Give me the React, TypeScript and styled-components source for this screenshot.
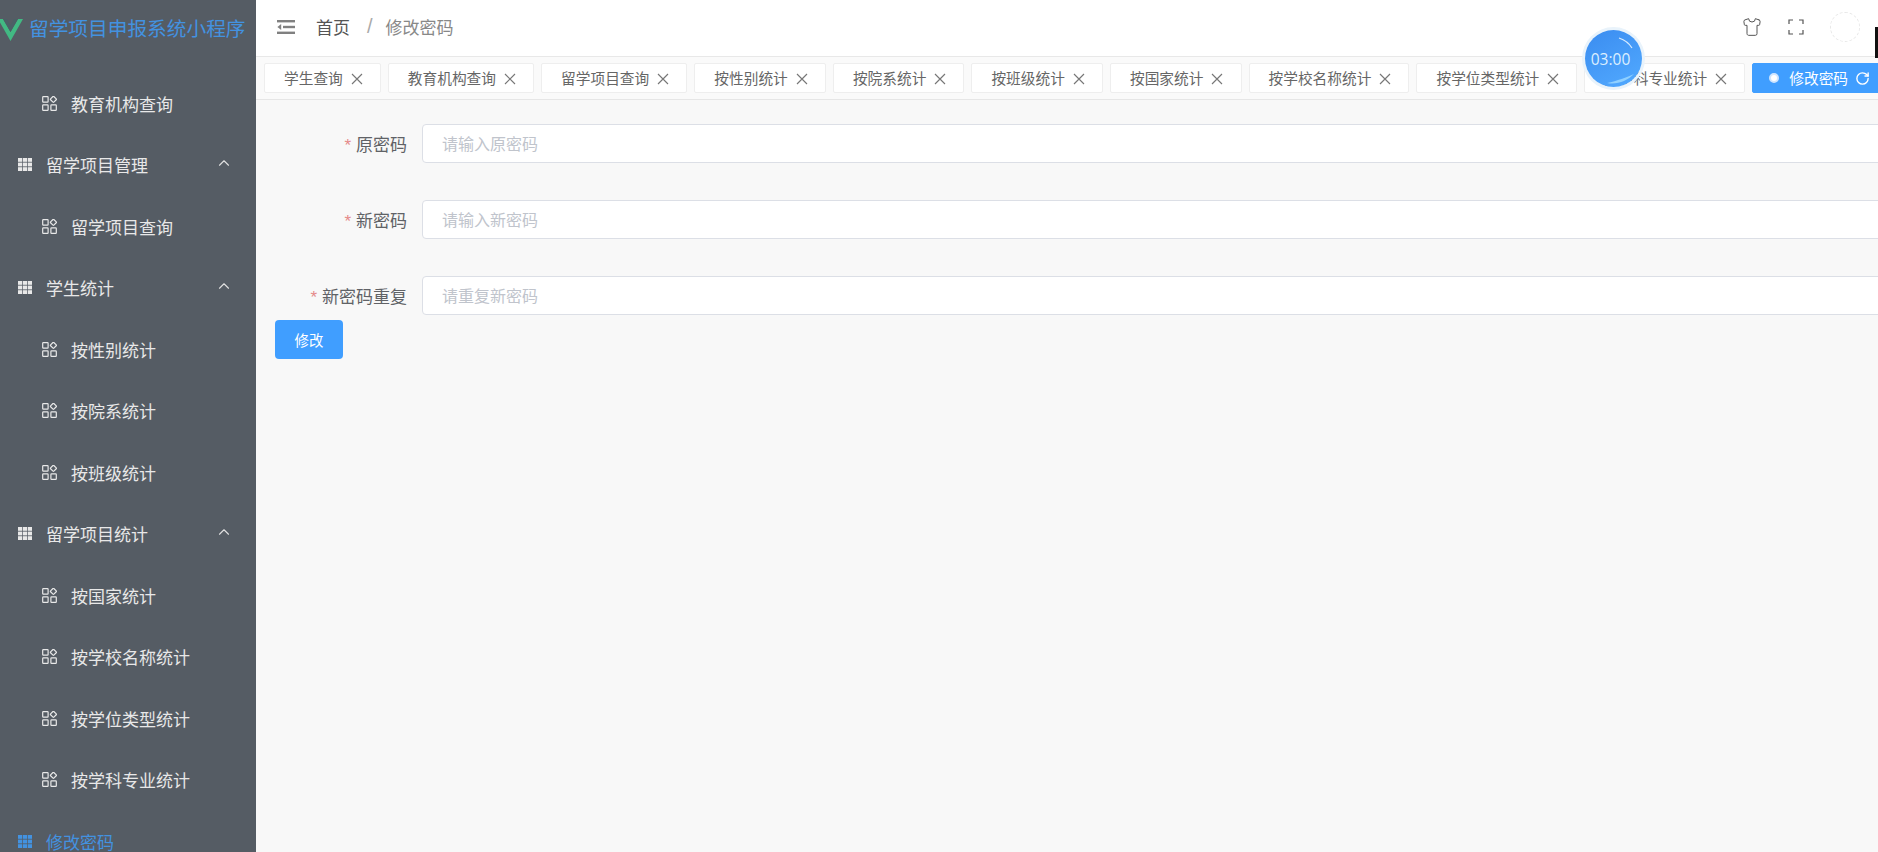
import React from "react"
import styled, { createGlobalStyle } from "styled-components"
import { ChevronUp, RotateCw, Shirt } from "lucide-react"

const GlobalStyle = createGlobalStyle`
  html, body {
    margin: 0;
    height: 100%;
    overflow: hidden;
    background: #f8f8f8;
    font-family: "Liberation Sans", "Noto Sans CJK SC", sans-serif;
  }
  * {
    box-sizing: border-box;
  }
`

const SubIcon = () => (
  <svg width="15" height="15" viewBox="0 0 15 15" fill="none" stroke="currentColor" strokeWidth="1.2">
    <rect x="0.7" y="0.7" width="5.4" height="5.4" rx="0.6" />
    <rect x="9.1" y="1" width="4.6" height="4.6" rx="0.6" transform="rotate(45 11.4 3.3)" />
    <rect x="0.7" y="8.9" width="5.4" height="5.4" rx="0.6" />
    <rect x="8.9" y="8.9" width="5.4" height="5.4" rx="0.6" />
  </svg>
)

const GridIcon = () => (
  <svg width="14" height="13" viewBox="0 0 14 13" fill="currentColor">
    {[0, 4.6, 9.2].flatMap(y =>
      [0, 4.9, 9.8].map(x => <rect key={`${x}-${y}`} x={x} y={y} width="4.2" height="3.8" />)
    )}
  </svg>
)

const VueLogo = () => (
  <svg width="25" height="22" viewBox="0 0 25 22">
    <polygon points="0,0 5,0 12.5,13 20,0 25,0 12.5,22" fill="#42b983" />
    <polygon points="5,0 9,0 12.5,6 16,0 20,0 12.5,13" fill="#4c5f66" />
  </svg>
)

const FoldIcon = () => (
  <svg width="18" height="14" viewBox="0 0 18 14" fill="#808080">
    <rect x="0" y="0" width="18" height="2.4" />
    <rect x="6" y="5.8" width="12" height="2.4" />
    <rect x="0" y="11.6" width="18" height="2.4" />
    <polygon points="4.2,4 4.2,10 0.4,7" />
  </svg>
)

const FullIcon = () => (
  <svg width="16" height="16" viewBox="0 0 16 16" fill="none" stroke="#555" strokeWidth="1.2">
    <path d="M1 5V1h4M11 1h4v4M15 11v4h-4M5 15H1v-4" />
  </svg>
)

const CloseIcon = () => (
  <svg width="12" height="12" viewBox="0 0 12 12" fill="none" stroke="#777" strokeWidth="1.15">
    <path d="M1 1l10 10M11 1L1 11" />
  </svg>
)

const TimerShine = () => (
  <TimerArt viewBox="0 0 57 57" fill="none">
    <path d="M34 8 C40 10 44 13 47 18" stroke="#d5eaff" strokeWidth="1.2" />
    <path d="M22 53 C32 55 42 51 49 44 C42 47 32 51 22 53Z" fill="#8fd0ff" />
  </TimerArt>
)

type MenuEntry = { label: string; kind: "group" | "sub" | "active" }

const menu: MenuEntry[] = [
  { label: "教育机构查询", kind: "sub" },
  { label: "留学项目管理", kind: "group" },
  { label: "留学项目查询", kind: "sub" },
  { label: "学生统计", kind: "group" },
  { label: "按性别统计", kind: "sub" },
  { label: "按院系统计", kind: "sub" },
  { label: "按班级统计", kind: "sub" },
  { label: "留学项目统计", kind: "group" },
  { label: "按国家统计", kind: "sub" },
  { label: "按学校名称统计", kind: "sub" },
  { label: "按学位类型统计", kind: "sub" },
  { label: "按学科专业统计", kind: "sub" },
  { label: "修改密码", kind: "active" }
]

const tags = [
  "学生查询",
  "教育机构查询",
  "留学项目查询",
  "按性别统计",
  "按院系统计",
  "按班级统计",
  "按国家统计",
  "按学校名称统计",
  "按学位类型统计",
  "按学科专业统计"
]

const fields = [
  { label: "原密码", placeholder: "请输入原密码" },
  { label: "新密码", placeholder: "请输入新密码" },
  { label: "新密码重复", placeholder: "请重复新密码" }
]

export default function App() {
  return (
    <>
      <GlobalStyle />
      <Layout>
        <Sidebar>
          <Brand>
            <VueLogo />
            <BrandTitle>留学项目申报系统小程序</BrandTitle>
          </Brand>
          {menu.map(item =>
            item.kind === "sub" ? (
              <SubItem key={item.label}>
                <SubIcon />
                {item.label}
              </SubItem>
            ) : (
              <GroupItem key={item.label} $active={item.kind === "active"}>
                <GridIcon />
                {item.label}
                {item.kind === "group" && (
                  <Chevron>
                    <ChevronUp size={18} strokeWidth={1.5} />
                  </Chevron>
                )}
              </GroupItem>
            )
          )}
        </Sidebar>
        <Main>
          <Header>
            <FoldIcon />
            <Crumbs>
              <CrumbHome>首页</CrumbHome>
              <CrumbSep>/</CrumbSep>
              <CrumbCurrent>修改密码</CrumbCurrent>
            </Crumbs>
            <HeaderTools>
              <Shirt size={20} strokeWidth={1.2} color="#555" />
              <FullIcon />
              <Avatar />
            </HeaderTools>
          </Header>
          <TagBar>
            {tags.map(tag => (
              <Tag key={tag}>
                {tag}
                <CloseIcon />
              </Tag>
            ))}
            <ActiveTag>
              <ActiveDot />
              修改密码
              <RotateCw size={15} strokeWidth={2.2} />
            </ActiveTag>
          </TagBar>
          <Content>
            {fields.map(field => (
              <FormRow key={field.label}>
                <FieldLabel>
                  <Star>*</Star>
                  {field.label}
                </FieldLabel>
                <FieldInput placeholder={field.placeholder} readOnly />
              </FormRow>
            ))}
            <SubmitButton type="button">修改</SubmitButton>
          </Content>
        </Main>
      </Layout>
      <Timer>
        <TimerShine />
        03:00
      </Timer>
      <CursorMark />
    </>
  )
}

const Layout = styled.div`
  display: flex;
  width: 1878px;
  height: 852px;
  overflow: hidden;
`

const Sidebar = styled.aside`
  flex: 0 0 256px;
  height: 852px;
  overflow: hidden;
  background: #555c64;
  color: #e8e8e8;
  font-size: 17px;
`

const Brand = styled.div`
  display: flex;
  align-items: center;
  gap: 6px;
  height: 72.3px;
  padding: 0 0 18px 0;
  margin-left: -2px;

  svg {
    margin-top: 5px;
  }
`

const BrandTitle = styled.span`
  font-size: 19.7px;
  color: #4392e0;
  white-space: nowrap;
`

const SubItem = styled.div`
  display: flex;
  align-items: center;
  gap: 14px;
  height: 61.5px;
  padding-left: 42px;
`

const GroupItem = styled.div<{ $active?: boolean }>`
  display: flex;
  align-items: center;
  gap: 14px;
  height: 61.5px;
  padding-left: 18px;
  color: ${p => (p.$active ? "#4392e0" : "#e8e8e8")};
`

const Chevron = styled.span`
  display: flex;
  margin-left: auto;
  margin-right: 23px;
  margin-top: -4px;
  color: #e0e0e0;
`

const Main = styled.main`
  flex: 1;
  min-width: 0;
  display: flex;
  flex-direction: column;
`

const Header = styled.header`
  display: flex;
  align-items: center;
  height: 57px;
  padding: 0 18px 3px 21px;
  background: #fff;
  border-bottom: 1px solid #e8e8e8;
`

const Crumbs = styled.div`
  display: flex;
  align-items: center;
  margin-left: 21px;
  font-size: 17px;
`

const CrumbHome = styled.span`
  color: #555;
`

const CrumbSep = styled.span`
  margin: 0 13px 0 17px;
  font-size: 20px;
  color: #aaa;
`

const CrumbCurrent = styled.span`
  color: #888;
`

const HeaderTools = styled.div`
  display: flex;
  align-items: center;
  gap: 26px;
  margin-left: auto;
`

const Avatar = styled.div`
  width: 30px;
  height: 30px;
  border-radius: 50%;
  border: 1px dashed #e8e8e8;
`

const TagBar = styled.div`
  display: flex;
  align-items: center;
  gap: 7px;
  height: 43px;
  padding: 0 0 1px 8px;
  background: #fafafa;
  border-bottom: 1px solid #e6e6e6;
  overflow: hidden;
  white-space: nowrap;
`

const Tag = styled.div`
  flex: none;
  display: flex;
  align-items: center;
  gap: 8px;
  height: 30px;
  padding: 0 17.1px 0 19px;
  font-size: 14.7px;
  color: #666;
  background: #fff;
  border: 1px solid #eee;
  border-radius: 2px;

  svg {
    margin-top: 2px;
  }
`

const ActiveTag = styled(Tag)`
  gap: 0;
  padding: 0 0 0 16px;
  width: 140px;
  color: #fff;
  background: #409eff;
  border-color: #409eff;
  font-size: 14.7px;

  svg {
    margin-left: 7px;
  }
`

const ActiveDot = styled.span`
  width: 10px;
  height: 10px;
  margin-right: 10px;
  border-radius: 50%;
  background: #fff;
  border: 2px solid #cfe5ff;
`

const Content = styled.section`
  flex: 1;
  padding: 24px 0 0 19px;
  background: #f8f8f8;
  overflow: hidden;
`

const FormRow = styled.div`
  display: flex;
  align-items: center;
  width: 1700px;
  height: 39px;
  margin-bottom: 37px;

  &:last-of-type {
    margin-bottom: 5px;
  }
`

const FieldLabel = styled.label`
  flex: 0 0 132px;
  text-align: right;
  margin-right: 15px;
  font-size: 17px;
  color: #606266;
`

const Star = styled.span`
  margin-right: 5px;
  color: #e58a8a;
`

const FieldInput = styled.input`
  flex: 1;
  height: 39px;
  padding: 2px 19px 0;
  font-family: inherit;
  font-size: 16px;
  background: #fff;
  border: 1px solid #dcdfe6;
  border-radius: 4px;
  outline: none;

  &::placeholder {
    color: #c0c4cc;
    opacity: 1;
  }
`

const SubmitButton = styled.button`
  display: block;
  width: 68px;
  height: 39px;
  padding: 0;
  font-family: inherit;
  font-size: 14.4px;
  color: #fff;
  background: #409eff;
  border: none;
  border-radius: 4px;
`

const Timer = styled.div`
  position: absolute;
  left: 1585px;
  top: 30px;
  width: 57px;
  height: 57px;
  display: flex;
  align-items: center;
  justify-content: center;
  padding-right: 6px;
  font-family: "Open Sans", sans-serif;
  font-size: 15.5px;
  color: #dcefff;
  border-radius: 50%;
  background: linear-gradient(150deg, #3a8cf0, #52aaff);
  box-shadow: 0 0 0 3px #e9f3fb;
`

const TimerArt = styled.svg`
  position: absolute;
  inset: 0;
`

const CursorMark = styled.div`
  position: absolute;
  left: 1875px;
  top: 27px;
  width: 3px;
  height: 31px;
  background: #111;
`
